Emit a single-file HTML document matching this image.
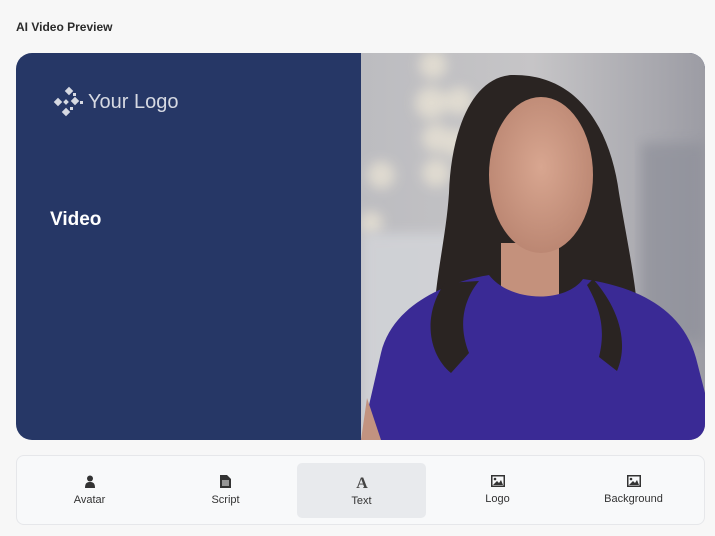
<!DOCTYPE html>
<html><head><meta charset="utf-8"><style>
*{margin:0;padding:0;box-sizing:border-box}
body{width:715px;height:536px;background:#f7f7f7;font-family:"Liberation Sans",sans-serif;position:relative;overflow:hidden}
.title{position:absolute;left:16px;top:20px;font-size:12px;font-weight:bold;color:#2b2b2b}
.card{position:absolute;left:16px;top:53px;width:689px;height:387px;border-radius:16px;overflow:hidden;background:#263766}
.logo{position:absolute;left:36px;top:33px;display:flex;align-items:center;color:#d6d9e2;font-size:20px}
.video{position:absolute;left:34px;top:156px;color:#fff;font-weight:bold;font-size:19px}
.photo{position:absolute;left:345px;top:0;width:344px;height:387px}
.bar{position:absolute;left:16px;top:455px;width:689px;height:70px;border:1px solid #e6e7ea;border-radius:8px;background:#f8f9fa}
.tab{position:absolute;top:7px;width:129px;height:55px;text-align:center;font-size:11px;color:#333}
.tab svg{display:block;margin:12px auto 6px}
.sel{background:#e8eaed;border-radius:5px}
</style></head><body>
<div class="title">AI Video Preview</div>
<div class="card">
 <div class="logo"><svg width="32" height="32" viewBox="0 0 32 32" fill="#d6d9e2"><rect x="14" y="2" width="6" height="6" transform="rotate(45 17 5)"/><rect x="21" y="7" width="3" height="3"/><rect x="3" y="13" width="6" height="6" transform="rotate(45 6 16)"/><rect x="12" y="14" width="4" height="4" transform="rotate(45 14 16)"/><rect x="20" y="12" width="6" height="6" transform="rotate(45 23 15)"/><rect x="28" y="15" width="3" height="3"/><rect x="11" y="23" width="6" height="6" transform="rotate(45 14 26)"/><rect x="18" y="21" width="3" height="3"/></svg><span style="margin-left:4px">Your Logo</span></div>
 <div class="video">Video</div>
 <svg class="photo" viewBox="0 0 344 387">
  <defs>
   <linearGradient id="bg" x1="0" x2="1"><stop offset="0" stop-color="#bcbcc0"/><stop offset=".5" stop-color="#c6c5c7"/><stop offset="1" stop-color="#9c9ca4"/></linearGradient>
   <filter id="bl"><feGaussianBlur stdDeviation="6"/></filter>
   <radialGradient id="sk" cx=".5" cy=".45" r=".6"><stop offset="0" stop-color="#d8a690"/><stop offset="1" stop-color="#b98470"/></radialGradient>
  </defs>
  <rect width="344" height="387" fill="url(#bg)"/>
  <g filter="url(#bl)" fill="#e8e2d4" opacity=".8">
   <circle cx="72" cy="12" r="14"/><circle cx="70" cy="50" r="16"/><circle cx="98" cy="48" r="14"/><circle cx="75" cy="85" r="14"/><circle cx="95" cy="90" r="14"/><circle cx="75" cy="120" r="14"/><circle cx="20" cy="122" r="14"/><circle cx="10" cy="170" r="12"/>
  </g>
  <rect x="0" y="180" width="100" height="207" fill="#d4d6da" filter="url(#bl)" opacity=".8"/>
  <rect x="280" y="90" width="64" height="200" fill="#8e909a" filter="url(#bl)" opacity=".7"/>
  <path d="M150 22 C110 25 90 80 88 140 C84 200 66 250 76 310 L130 320 L230 320 L278 305 C280 250 268 200 258 140 C250 80 220 20 150 22Z" fill="#2a2422"/>
  <rect x="140" y="190" width="58" height="80" fill="#c4917c"/>
  <ellipse cx="180" cy="122" rx="52" ry="78" fill="url(#sk)"/>
  <path d="M0 387 L20 300 C35 240 110 225 128 222 C150 250 205 250 222 226 C265 232 320 250 335 305 L344 340 L344 387Z" fill="#3a2a95"/>
  <path d="M6 345 L20 387 L0 387Z" fill="#c29380"/>
  <path d="M84 230 C62 260 66 300 90 320 L108 300 C96 270 104 245 118 228Z M232 226 C258 255 268 290 256 318 L238 304 C246 272 236 250 226 232Z" fill="#2a2422"/>
 </svg>
</div>
<div class="bar">
 <div class="tab" style="left:8px"><svg width="12" height="13" viewBox="0 0 12 13" fill="#333"><circle cx="6" cy="3.5" r="3"/><path d="M1 13 C1 8 3 7 6 7 C9 7 11 8 11 13Z"/></svg>Avatar</div>
 <div class="tab" style="left:144px"><svg width="11" height="13" viewBox="0 0 11 13" fill="#333"><path d="M0 0h7l4 4v9H0Z"/><path d="M2 6h7M2 8h7M2 10h7" stroke="#f8f9fa" stroke-width="1"/></svg>Script</div>
 <div class="tab sel" style="left:280px"><svg width="14" height="14" viewBox="0 0 14 14"><text x="7" y="13" text-anchor="middle" font-family="Liberation Serif" font-weight="bold" font-size="16" fill="#444">A</text></svg>Text</div>
 <div class="tab" style="left:416px"><svg width="14" height="12" viewBox="0 0 14 12"><rect x=".75" y=".75" width="12.5" height="10.5" fill="none" stroke="#333" stroke-width="1.5"/><circle cx="4" cy="4" r="1.3" fill="#333"/><path d="M2 10 L6 6 L8 8 L10 5 L12 10Z" fill="#333"/></svg>Logo</div>
 <div class="tab" style="left:552px"><svg width="14" height="12" viewBox="0 0 14 12"><rect x=".75" y=".75" width="12.5" height="10.5" fill="none" stroke="#333" stroke-width="1.5"/><circle cx="4" cy="4" r="1.3" fill="#333"/><path d="M2 10 L6 6 L8 8 L10 5 L12 10Z" fill="#333"/></svg>Background</div>
</div>
</body></html>
